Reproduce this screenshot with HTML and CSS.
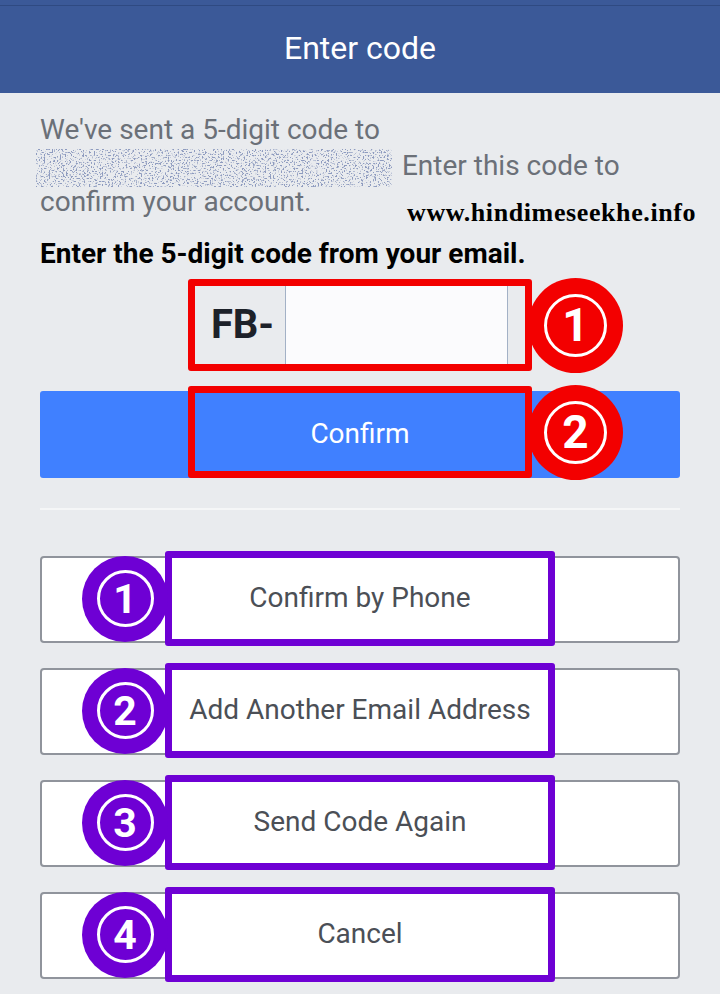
FILE: index.html
```html
<!DOCTYPE html>
<html lang="en">
<head>
  <meta charset="UTF-8">
  <meta name="viewport" content="width=device-width, initial-scale=1.0">
  <title>Enter code</title>
  <link rel="stylesheet" href="styles.css">
</head>
<body>
  <div class="header">
    <h1>Enter code</h1>
  </div>

  <div class="content">
    <p class="intro">We've sent a 5-digit code to <svg class="redacted" width="356" height="38" aria-hidden="true"><defs><filter id="noise" x="0" y="0" width="100%" height="100%"><feTurbulence type="fractalNoise" baseFrequency="0.62" numOctaves="1" seed="7"/><feColorMatrix type="matrix" values="0 0 0 0 0.27  0 0 0 0 0.33  0 0 0 0 0.52  7 7 0 0 -7.4"/></filter></defs><rect width="356" height="38" filter="url(#noise)"/></svg> Enter this code to</p>
    <div class="intro-last">
      <span class="intro-end">confirm your account.</span>
      <span class="watermark">www.hindimeseekhe.info</span>
    </div>

    <label class="code-label">Enter the 5-digit code from your email.</label>

    <div class="code-row">
      <span class="code-prefix">FB-</span>
      <input class="code-input" type="text">
      <span class="code-end"></span>
      <span class="mark mark-red"></span>
      <span class="badge badge-red badge-side"><span class="ring">1</span></span>
    </div>

    <div class="confirm-wrap">
      <button class="confirm">Confirm</button>
      <span class="mark mark-red mark-confirm"></span>
      <span class="badge badge-red badge-side"><span class="ring">2</span></span>
    </div>

    <hr class="divider">

    <div class="options">
      <div class="option">
        <button>Confirm by Phone</button>
        <span class="mark mark-purple"></span>
        <span class="badge badge-purple"><span class="ring">1</span></span>
      </div>
      <div class="option">
        <button>Add Another Email Address</button>
        <span class="mark mark-purple"></span>
        <span class="badge badge-purple"><span class="ring">2</span></span>
      </div>
      <div class="option">
        <button>Send Code Again</button>
        <span class="mark mark-purple"></span>
        <span class="badge badge-purple"><span class="ring">3</span></span>
      </div>
      <div class="option">
        <button>Cancel</button>
        <span class="mark mark-purple"></span>
        <span class="badge badge-purple"><span class="ring">4</span></span>
      </div>
    </div>
  </div>
</body>
</html>
```

FILE: styles.css
```css
body {
  margin: 0;
  height: 994px;
  overflow: hidden;
  background: #e9ebee;
  font-family: Roboto, "Liberation Sans", sans-serif;
}

.header {
  height: 88px;
  border-top: 5px solid #3b5998;
  background: #3b5998;
  box-shadow: inset 0 1px 0 #2f4a82;
  display: flex;
  align-items: center;
  justify-content: center;
}

.header h1 {
  margin: 0 0 2px;
  font-size: 32px;
  font-weight: 400;
  color: white;
}

.content {
  padding: 19px 40px 0;
}

.intro {
  margin: 0;
  width: 600px;
  font-size: 28px;
  line-height: 36px;
  color: #6b7078;
}

.redacted {
  vertical-align: middle;
  margin: -2px 3px -2px -4px;
}

.intro-last {
  display: flex;
  height: 36px;
  font-size: 28px;
  line-height: 36px;
  color: #6b7078;
}

.intro-end {
  flex: none;
  width: 367px;
  margin-top: -1px;
}

.watermark {
  flex: none;
  margin-top: 13px;
  font-family: "Liberation Serif", serif;
  font-size: 26px;
  font-weight: bold;
  line-height: 30px;
  color: black;
  letter-spacing: 0.6px;
  white-space: nowrap;
}

.code-label {
  display: block;
  margin-top: 17px;
  font-size: 28px;
  font-weight: 700;
  line-height: 32px;
  color: black;
}

.code-row {
  position: relative;
  display: flex;
  width: 330px;
  height: 78px;
  margin: 16px auto 0;
}

.code-prefix {
  box-sizing: border-box;
  width: 90px;
  padding-left: 5px;
  display: flex;
  align-items: center;
  justify-content: center;
  font-size: 40px;
  font-weight: 700;
  color: #1d2129;
}

.code-input {
  box-sizing: border-box;
  width: 223px;
  height: 78px;
  padding: 0;
  border: none;
  border-left: 1px solid #a3b1c6;
  border-right: 1px solid #a3b1c6;
  border-radius: 0;
  background: #fbfbfd;
  outline: none;
}

.code-end {
  flex: 1;
}

.mark {
  position: absolute;
  box-sizing: border-box;
  border-radius: 3px;
  pointer-events: none;
}

.mark-red {
  left: -7px;
  right: -7px;
  top: -7px;
  bottom: -7px;
  border: 7px solid #f30000;
}

.mark-confirm {
  left: 148px;
  right: 148px;
  top: -5px;
  bottom: 0;
}

.badge {
  position: absolute;
  display: flex;
  align-items: center;
  justify-content: center;
  border-radius: 50%;
}

.ring {
  display: flex;
  align-items: center;
  justify-content: center;
  box-sizing: border-box;
  border: 3px solid white;
  border-radius: 50%;
  color: white;
  font-weight: 700;
}

.badge-red {
  width: 95px;
  height: 95px;
  background: #f30000;
}

.badge-red .ring {
  width: 63px;
  height: 63px;
  font-size: 46px;
}

.badge-side {
  right: -98px;
  top: -8px;
}

.confirm-wrap .badge-side {
  right: 57px;
  top: -6px;
}

.confirm-wrap {
  position: relative;
  margin-top: 27px;
}

.confirm {
  display: block;
  width: 100%;
  height: 87px;
  padding: 0 0 2px;
  border: none;
  border-radius: 3px;
  background: #4080ff;
  color: white;
  font-family: inherit;
  font-size: 28px;
}

.divider {
  height: 2px;
  margin: 30px 0 0;
  border: none;
  background: #f5f6f7;
}

.options {
  display: flex;
  flex-direction: column;
  gap: 25px;
  margin-top: 46px;
}

.option {
  position: relative;
}

.option button {
  display: block;
  box-sizing: border-box;
  width: 100%;
  height: 87px;
  padding: 0 0 4px;
  border: 2px solid #90949c;
  border-radius: 4px;
  background: white;
  color: #4b4f56;
  font-family: inherit;
  font-size: 28px;
}

.mark-purple {
  left: 125px;
  right: 125px;
  top: -5px;
  bottom: -3px;
  border: 7px solid #6e00d4;
}

.badge-purple {
  left: 42px;
  top: 0;
  width: 86px;
  height: 86px;
  background: #6e00d4;
}

.badge-purple .ring {
  width: 57px;
  height: 57px;
  font-size: 41px;
}
```
